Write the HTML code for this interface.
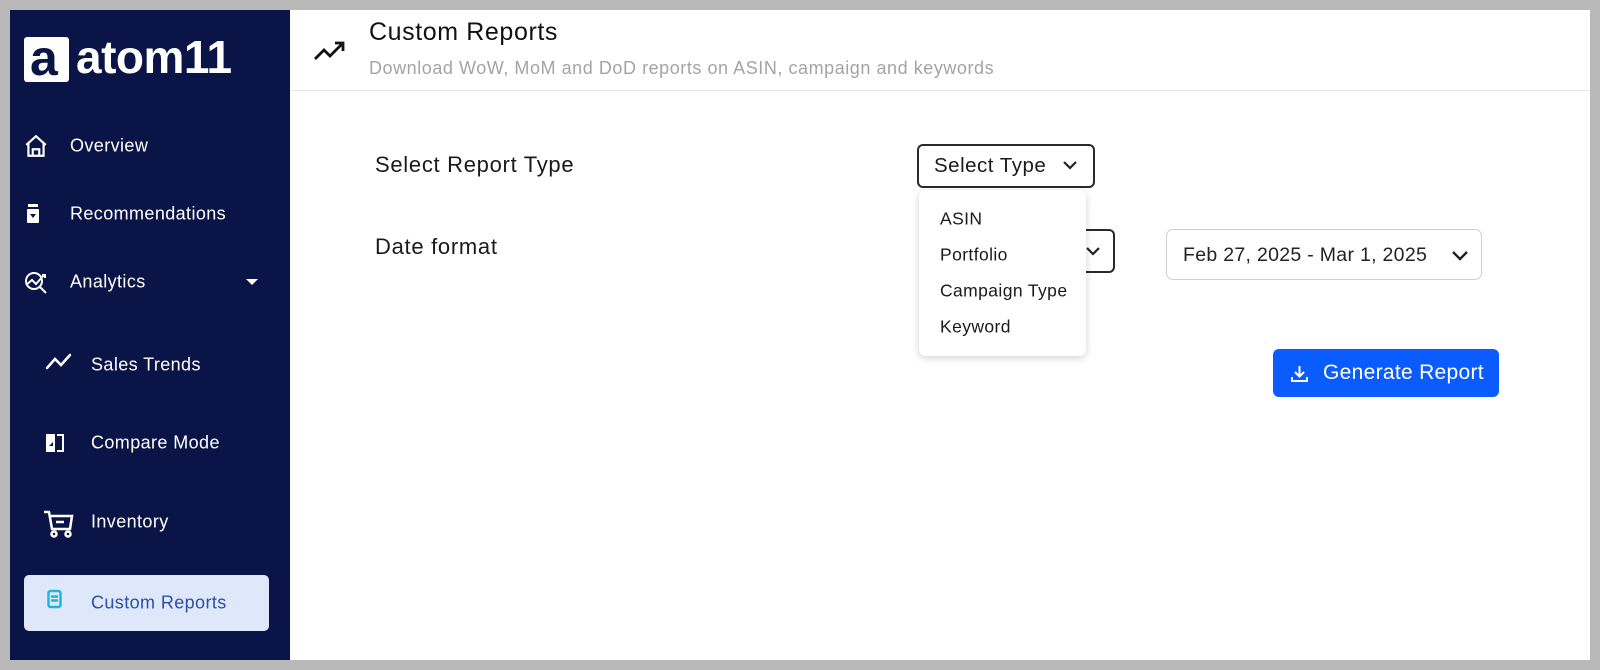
<!DOCTYPE html>
<html><head><meta charset="utf-8"><style>
*{margin:0;padding:0;box-sizing:border-box}
body{width:1600px;height:670px;background:#b9b9b9;font-family:"Liberation Sans",sans-serif;position:relative;overflow:hidden}
.frame{position:absolute;left:10px;top:10px;width:1580px;height:650px;background:#fff}
.side{position:absolute;left:10px;top:10px;width:280px;height:650px;background:#0b1446}
.abs{position:absolute}
.nav{position:absolute;color:#fff;font-size:18px;letter-spacing:0.4px;transform:translateY(-50%)}
.ico{position:absolute;transform:translateY(-50%)}
.hdr{position:absolute;left:290px;top:10px;width:1300px;height:81px;border-bottom:1px solid #e6e6e6}
.lbl{position:absolute;font-size:22px;letter-spacing:0.7px;color:#1a1a1a;transform:translateY(-50%)}
.item{position:absolute;left:940px;font-size:17.5px;letter-spacing:0.4px;color:#1a1a1a;transform:translateY(-50%)}
</style></head><body>
<div class="frame"></div>
<div class="side"></div>
<!-- logo -->
<div class="abs" style="left:24px;top:37px;width:45px;height:45px;background:#fff;border-radius:3px"></div>
<div class="abs" style="left:30px;top:30px;font-size:50px;font-weight:bold;color:#0b1446;line-height:56px">a</div>
<div class="abs" style="left:76px;top:29px;font-size:46px;font-weight:bold;color:#fff;line-height:56px;letter-spacing:-0.5px">atom11</div>
<!-- nav -->
<svg class="ico" style="left:23px;top:146px" width="26" height="26" viewBox="0 0 24 24" fill="none" stroke="#fff" stroke-width="2"><path d="M3 11L12 3l9 8M5 9v12h14V9M9 21v-6h6v6"/></svg>
<div class="nav" style="left:70px;top:146px">Overview</div>
<svg class="ico" style="left:25px;top:214px" width="16" height="20" viewBox="0 0 16 20" fill="#fff"><rect x="3" y="0" width="10" height="3"/><rect x="2" y="5" width="12" height="14" rx="1"/><path d="M5 10h6l-3 4z" fill="#0b1446"/></svg>
<div class="nav" style="left:70px;top:214px">Recommendations</div>
<svg class="ico" style="left:22px;top:282px" width="28" height="26" viewBox="0 0 28 26" fill="none" stroke="#fff" stroke-width="2"><circle cx="12" cy="12" r="8"/><path d="M4 16l6-5 4 4 8-9M18 18l6 6M20 6h3v3"/></svg>
<div class="nav" style="left:70px;top:282px">Analytics</div>
<svg class="abs" style="left:245px;top:278px" width="14" height="8" viewBox="0 0 14 8"><path d="M1 1h12L7 7z" fill="#fff"/></svg>
<svg class="ico" style="left:45px;top:362px" width="28" height="18" viewBox="0 0 28 18" fill="none" stroke="#fff" stroke-width="2.5" stroke-linecap="round"><path d="M2 15l8-9 6 6 9-10"/></svg>
<div class="nav" style="left:91px;top:365px">Sales Trends</div>
<svg class="ico" style="left:46px;top:443px" width="20" height="22" viewBox="0 0 20 22" fill="#fff"><rect x="0" y="2" width="9" height="18"/><path d="M11 2h7v18h-7v-2h5V4h-5z"/><path d="M3 14l4-4v4z" fill="#0b1446"/></svg>
<div class="nav" style="left:91px;top:443px">Compare Mode</div>
<svg class="ico" style="left:43px;top:524px" width="32" height="30" viewBox="0 0 32 30" fill="none" stroke="#fff" stroke-width="2.5"><path d="M1 3h5l3 17h18l2-13H8M13 13h8"/><circle cx="11" cy="25" r="2.5"/><circle cx="25" cy="25" r="2.5"/></svg>
<div class="nav" style="left:91px;top:522px">Inventory</div>
<div class="abs" style="left:24px;top:575px;width:245px;height:56px;background:#dfe8fb;border-radius:5px"></div>
<svg class="ico" style="left:47px;top:599px" width="15" height="19" viewBox="0 0 15 19" fill="none" stroke="#1fb7d6" stroke-width="2.5"><rect x="1.5" y="1.5" width="12" height="16" rx="2"/><path d="M4 7h7M4 11h7"/></svg>
<div class="nav" style="left:91px;top:603px;color:#2c4fa3">Custom Reports</div>
<!-- header -->
<div class="hdr"></div>
<svg class="abs" style="left:313px;top:40px" width="36" height="22" viewBox="0 0 36 22" fill="none" stroke="#111" stroke-width="2.8"><path d="M2 19l9-9 6 6 13-13M22 3h8v8"/></svg>
<div class="abs" style="left:369px;top:18px;font-size:25px;letter-spacing:0.6px;color:#111">Custom Reports</div>
<div class="abs" style="left:369px;top:58px;font-size:18px;letter-spacing:0.55px;color:#a4a4a4">Download WoW, MoM and DoD reports on ASIN, campaign and keywords</div>
<!-- form -->
<div class="lbl" style="left:375px;top:165px">Select Report Type</div>
<div class="lbl" style="left:375px;top:247px">Date format</div>
<div class="abs" style="left:917px;top:144px;width:178px;height:44px;border:2px solid #2a2a2a;border-radius:6px"></div>
<div class="abs" style="left:934px;top:154px;font-size:20.5px;letter-spacing:0.5px;color:#1a1a1a">Select Type</div>
<svg class="abs" style="left:1062px;top:160px" width="16" height="10" viewBox="0 0 16 10" fill="none" stroke="#222" stroke-width="2.2"><path d="M2 2l6 6 6-6"/></svg>
<div class="abs" style="left:960px;top:229px;width:155px;height:44px;border:2px solid #2a2a2a;border-radius:6px"></div>
<svg class="abs" style="left:1085px;top:244px" width="16" height="14" viewBox="0 0 16 14" fill="none" stroke="#222" stroke-width="2.2"><path d="M2 4l6 6 6-6"/></svg>
<div class="abs" style="left:1166px;top:229px;width:316px;height:51px;border:1px solid #cfcfcf;border-radius:7px"></div>
<div class="abs" style="left:1183px;top:244px;font-size:19.5px;letter-spacing:0.3px;color:#222">Feb 27, 2025 - Mar 1, 2025</div>
<svg class="abs" style="left:1451px;top:250px" width="18" height="11" viewBox="0 0 18 11" fill="none" stroke="#222" stroke-width="2.4"><path d="M2 2l7 7 7-7"/></svg>
<!-- dropdown -->
<div class="abs" style="left:919px;top:190px;width:167px;height:166px;background:#fff;border-radius:7px;box-shadow:0 2px 8px rgba(0,0,0,.18)"></div>
<div class="item" style="top:219px">ASIN</div>
<div class="item" style="top:255px">Portfolio</div>
<div class="item" style="top:291px">Campaign Type</div>
<div class="item" style="top:327px">Keyword</div>
<!-- button -->
<div class="abs" style="left:1273px;top:349px;width:226px;height:48px;background:#0b5cff;border-radius:6px"></div>
<svg class="abs" style="left:1290px;top:364px" width="19" height="19" viewBox="0 0 19 19" fill="none" stroke="#fff" stroke-width="2"><path d="M9.5 2v10M5 8l4.5 4.5L14 8M2 13v4h15v-4"/></svg>
<div class="abs" style="left:1323px;top:361px;font-size:21px;letter-spacing:0.3px;color:#fff">Generate Report</div>
</body></html>
